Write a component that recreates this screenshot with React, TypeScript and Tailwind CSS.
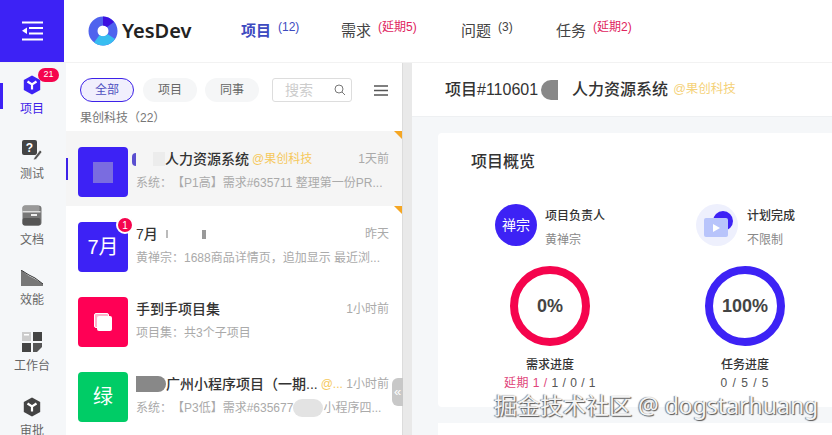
import React from "react";

const base = "font-['Liberation_Sans','Noto_Sans_CJK_SC',sans-serif] [text-spacing-trim:space-all]";

function CubeIcon({ fill }: { fill: string }) {
  return (
    <svg width="18" height="20" viewBox="0 0 18 20">
      <path d="M9 0.5 L17.2 5 V15 L9 19.5 L0.8 15 V5 Z" fill={fill} />
      <path d="M4.5 6.5 L9 9.5 L13.5 6.5 M9 9.5 V14.5" stroke="#fff" strokeWidth="2.2" fill="none" />
    </svg>
  );
}

function NavItem({ label, icon, h, active }: { label: string; icon: React.ReactNode; h: string; active?: boolean }) {
  return (
    <div className={`shrink-0 flex flex-col items-center justify-start ${h}`}>
      <div className="h-[23px] flex items-end justify-center">{icon}</div>
      <span className={`text-[12px] leading-[17px] mt-[6px] ${active ? "text-[#3d22e8]" : "text-[#666]"}`}>{label}</span>
    </div>
  );
}

function Row({
  selected, thumb, title, time, sub, corner, badge,
}: {
  selected?: boolean; thumb: React.ReactNode; title: React.ReactNode; time: string; sub: React.ReactNode; corner?: boolean; badge?: boolean;
}) {
  return (
    <div className={`relative h-[75px] flex items-start pt-[16px] pl-[12px] pr-[13px] ${selected ? "bg-[#f5f5f5]" : "bg-white"}`}>
      {selected && <div className="absolute -left-[1px] top-[27px] w-[3px] h-[22px] bg-[#3d22e8]" />}
      {corner && (
        <div className="absolute right-0 top-0 w-0 h-0 border-l-[8px] border-l-transparent border-t-[8px] border-t-[#f5a623]" />
      )}
      <div className="relative shrink-0">
        {thumb}
        {badge && (
          <div className="absolute -right-[6px] -top-[6px] w-[18px] h-[18px] rounded-full bg-[#f5044d] border-2 border-white text-white text-[10px] flex items-center justify-center">1</div>
        )}
      </div>
      <div className="ml-[8px] flex-1 min-w-0 pt-[2px]">
        <div className="flex items-center justify-between h-[20px]">
          <div className="min-w-0 flex items-center text-[14px] font-medium text-[#333] whitespace-nowrap">{title}</div>
          <span className="shrink-0 ml-[3px] text-[12px] text-[#aaa]">{time}</span>
        </div>
        <div className="mt-[4px] text-[12px] leading-[20px] text-[#aaa] whitespace-nowrap overflow-hidden">{sub}</div>
      </div>
    </div>
  );
}

function Thumb({ color, children }: { color: string; children?: React.ReactNode }) {
  return (
    <div className={`w-[50px] h-[50px] rounded-[4px] flex items-center justify-center text-white text-[20px] ${color}`}>{children}</div>
  );
}

function Ring({ color, label }: { color: string; label: string }) {
  return (
    <div className={`w-[80px] h-[80px] rounded-full border-[8px] flex items-center justify-center ${color}`}>
      <span className="text-[18px] font-bold text-[#444]">{label}</span>
    </div>
  );
}

function NavTab({ label, note, w, active, noteColor }: { label: string; note: string; w: string; active?: boolean; noteColor: string }) {
  return (
    <div className={`flex items-start ${w}`}>
      <span className={`text-[15px] leading-[22px] ${active ? "font-semibold text-[#3d4ac0]" : "text-[#444]"}`}>{label}</span>
      <span className={`ml-[7px] -mt-[1px] text-[12px] leading-[16px] ${noteColor}`}>{note}</span>
    </div>
  );
}

export default function App() {
  return (
    <div className={`w-[832px] h-[435px] overflow-hidden relative flex flex-col bg-[#f5f7f9] ${base}`}>
      {/* top bar */}
      <header className="h-[63px] shrink-0 flex items-stretch bg-white border-b border-[#f2f2f2]">
        <div className="w-[64px] bg-[#3d22f5] flex items-center justify-center">
          <svg width="22" height="20" viewBox="0 0 22 20">
            <path d="M1 1.5H22M8 7H22M8 12.5H22M1 18.5H22" stroke="#fff" strokeWidth="2" />
            <path d="M6 6.5V13L1 9.8Z" fill="#fff" />
          </svg>
        </div>
        <div className="ml-[24px] flex items-center w-[153px]">
          <svg width="30" height="30" viewBox="0 0 30 30">
            <circle cx="15" cy="15" r="10" fill="none" stroke="#4f63ee" strokeWidth="9" />
            <path d="M15 0.5 A14.5 14.5 0 0 1 26 6 L19 11 A5.5 5.5 0 0 0 15 9.5 Z" fill="#3d10e0" />
            <path d="M27 23 A14.5 14.5 0 0 1 6 26.5 L11.5 19 A5.5 5.5 0 0 0 19.5 18 Z" fill="#38bdf0" />
          </svg>
          <span className="ml-[4px] text-[20px] font-semibold text-[#222] font-['Noto_Sans',sans-serif]">YesDev</span>
        </div>
        <nav className="flex items-center whitespace-nowrap">
          <NavTab w="w-[100px]" label="项目" note="(12)" active noteColor="text-[#3d4ac0]" />
          <NavTab w="w-[120px]" label="需求" note="(延期5)" noteColor="text-[#e0245e]" />
          <NavTab w="w-[95px]" label="问题" note="(3)" noteColor="text-[#444]" />
          <NavTab w="" label="任务" note="(延期2)" noteColor="text-[#e0245e]" />
        </nav>
      </header>

      <div className="flex-1 flex min-h-0">
        {/* side nav */}
        <aside className="relative w-[64px] shrink-0 bg-[#f5f7f9] pt-[9px] flex flex-col overflow-hidden">
          <div className="absolute left-0 top-[20px] w-[3px] h-[26px] bg-[#3d22f5]" />
          <NavItem h="h-[65px]" label="项目" active icon={<div className="relative"><CubeIcon fill="#3d22f5" /><div className="absolute left-[15px] -top-[7px] w-[21px] h-[14px] rounded-full bg-[#f5044d] text-white text-[9px] flex items-center justify-center">21</div></div>} />
          <NavItem h="h-[66px]" label="测试" icon={
            <svg width="20" height="20" viewBox="0 0 20 20"><rect x="0" y="0" width="15" height="15" rx="2" fill="#444" /><text x="7.5" y="12" fontSize="12" fontWeight="700" fill="#fff" textAnchor="middle">?</text><path d="M12 18 L18 10 L20 12 L14 19.5 L11.5 20 Z" fill="#555" stroke="#fff" strokeWidth="0.6" /></svg>
          } />
          <NavItem h="h-[60px]" label="文档" icon={
            <svg width="20" height="21" viewBox="0 0 20 21"><rect x="0.5" y="0.5" width="19" height="20" rx="3" fill="#777" /><rect x="0.5" y="0.5" width="17" height="6" rx="2" fill="#999" /><rect x="0.5" y="6" width="18" height="1.5" fill="#ddd" /><rect x="9" y="9" width="6" height="2" fill="#eee" /><rect x="0.5" y="13" width="18" height="7.5" rx="2" fill="#555" /></svg>
          } />
          <NavItem h="h-[66px]" label="效能" icon={
            <svg width="22" height="16" viewBox="0 0 22 16"><path d="M0 0 L8 6 L14 9 L22 14 V16 H0 Z" fill="#777" /><path d="M0 0 L8 5 L14 8 L22 14" stroke="#333" strokeWidth="1" fill="none" /></svg>
          } />
          <NavItem h="h-[65px]" label="工作台" icon={
            <svg width="20" height="20" viewBox="0 0 20 20"><rect x="0" y="0" width="9" height="9" fill="#ccc" /><rect x="2" y="2" width="5" height="1.5" fill="#fff" /><rect x="11" y="0" width="9" height="9" fill="#444" /><rect x="0" y="11" width="9" height="9" fill="#444" /><path d="M11 11H20V15L15 20H11Z" fill="#555" /></svg>
          } />
          <NavItem h="h-[60px]" label="审批" icon={<CubeIcon fill="#444" />} />
        </aside>

        {/* list panel */}
        <section className="w-[336px] shrink-0 ml-[2px] bg-white relative overflow-hidden">
          <div className="flex items-center h-[24px] mt-[15px] pl-[14px] text-[12px]">
            <div className="w-[54px] h-[24px] rounded-full border border-[#3d22e8] bg-[#f1effd] text-[#4f4fc0] flex items-center justify-center">全部</div>
            <div className="ml-[9px] w-[54px] h-[24px] rounded-full bg-[#f5f6f7] text-[#666] flex items-center justify-center">项目</div>
            <div className="ml-[8px] w-[54px] h-[24px] rounded-full bg-[#f5f6f7] text-[#666] flex items-center justify-center">同事</div>
            <div className="ml-[13px] w-[80px] h-[24px] rounded-[3px] border border-[#ddd] flex items-center justify-between pl-[12px] pr-[5px] text-[14px] text-[#ccc]">
              <span>搜索</span>
              <svg width="12" height="12" viewBox="0 0 12 12" fill="none" stroke="#777"><circle cx="5" cy="5" r="4" /><path d="M8 8L11 11" /></svg>
            </div>
            <svg className="ml-[22px]" width="14" height="11" viewBox="0 0 14 11" stroke="#555" strokeWidth="1.4"><path d="M0 1H14M0 5.5H14M0 10H14" /></svg>
          </div>
          <div className="pl-[14px] text-[12px] leading-[17px] pt-[8px] h-[29px] text-[#777]">果创科技（22）</div>

          <Row
            selected corner
            thumb={<Thumb color="bg-[#3d22f5]"><div className="w-[20px] h-[21px] bg-[#7a6ce0]" /></Thumb>}
            title={<><span className="w-[4px] h-[13px] shrink-0 rounded-l-full bg-[#5a4fd0] mr-[17px] -ml-[4px]" /><span className="w-[12px] h-[14px] shrink-0 bg-[#ececec]" /><span>人力资源系统</span><span className="ml-[3px] text-[12px] font-normal text-[#f5c95d]">@果创科技</span></>}
            time="1天前"
            sub="系统：【P1高】需求#635711 整理第一份PR..."
          />
          <Row
            corner badge
            thumb={<Thumb color="bg-[#3d22f5]"><span className="text-[20px]">7月</span></Thumb>}
            title={<><span>7月</span><span className="ml-[8px] w-[2px] h-[8px] bg-[#bbb]" /><span className="ml-[34px] w-[4px] h-[9px] bg-[#999]" /></>}
            time="昨天"
            sub="黄禅宗：1688商品详情页，追加显示 最近浏..."
          />
          <Row
            thumb={<Thumb color="bg-[#ff0055]"><div className="relative w-[18px] h-[18px]"><div className="absolute left-0 top-0 w-[15px] h-[15px] rounded-[2px] border border-white bg-[#ffb3cc]" /><div className="absolute left-[3px] top-[3px] w-[15px] h-[15px] rounded-[2px] bg-white" /></div></Thumb>}
            title="手到手项目集"
            time="1小时前"
            sub="项目集：共3个子项目"
          />
          <Row
            thumb={<Thumb color="bg-[#00cc66]">绿</Thumb>}
            title={<><span className="w-[30px] h-[16px] shrink-0 rounded-r-full bg-[#888]" /><span>广州小程序项目（一期...</span><span className="ml-[3px] text-[12px] font-normal text-[#f5c95d]">@...</span></>}
            time="1小时前"
            sub={<span className="flex items-center">系统：【P3低】需求#635677<span className="w-[30px] h-[18px] rounded-full bg-[#e3e3e3] shrink-0" />小程序四...</span>}
          />
        </section>

        {/* divider */}
        <div className="relative w-[10px] shrink-0 bg-[#e9e9e9] border-l border-[#dcdcdc]">
          <div className="absolute -left-[11px] top-[315px] w-[11px] h-[28px] rounded-l-[6px] bg-[#c8c8c8] text-white text-[13px] flex items-center justify-center">«</div>
        </div>

        {/* detail */}
        <main className="flex-1 min-w-0 flex flex-col bg-[#f5f7f9]">
          <div className="h-[54px] shrink-0 bg-white flex items-center pl-[33px] whitespace-nowrap border-b border-[#eef0f2]">
            <span className="text-[16px] font-medium text-[#333]">项目#110601</span>
            <span className="ml-[3px] w-[17px] h-[20px] rounded-l-full bg-[#888]" />
            <span className="w-[14px]" />
            <span className="text-[16px] font-medium text-[#333]">人力资源系统</span>
            <span className="ml-[5px] text-[12.5px] text-[#f5d27a]">@果创科技</span>
          </div>
          <div className="flex-1 min-h-0 pl-[26px] pt-[16px] overflow-hidden">
            <div className="bg-white rounded-l-[4px] h-[274px] pt-[18px] pl-[33px] overflow-hidden">
              <h2 className="text-[16px] font-medium text-[#333] leading-[22px]">项目概览</h2>
              <div className="mt-[31px] flex">
                <div className="w-[201px] shrink-0 pl-[24px]">
                  <div className="flex items-start">
                    <div className="w-[42px] h-[42px] rounded-full bg-[#3d22f5] text-white text-[14px] flex items-center justify-center">禅宗</div>
                    <div className="ml-[8px] pt-[4px]">
                      <div className="text-[12px] font-medium text-[#333] leading-[16px]">项目负责人</div>
                      <div className="mt-[8px] text-[12px] text-[#888] leading-[16px]">黄禅宗</div>
                    </div>
                  </div>
                  <div className="mt-[18px] ml-[15px] w-[80px]"><Ring color="border-[#f5044d]" label="0%" /></div>
                  <div className="mt-[11px] -ml-[5px] w-[120px] text-center">
                    <div className="text-[12px] font-medium text-[#333] leading-[16px]">需求进度</div>
                    <div className="mt-[2px] text-[12px] leading-[16px] text-[#555] tracking-[0.5px]"><span className="text-[#e0447a]">延期 1 / </span>1 / 0 / 1</div>
                  </div>
                </div>
                <div className="w-[160px] shrink-0 pl-[24px]">
                  <div className="flex items-start">
                    <div className="relative w-[42px] h-[42px] shrink-0 rounded-full bg-[#eef0fd]">
                      <div className="absolute left-[17px] top-[7px] w-[20px] h-[20px] rounded-full bg-[#3d22f5]" />
                      <div className="absolute left-[8px] top-[14px] w-[24px] h-[19px] rounded-[2px] bg-[#b8c4fb] flex items-center justify-center">
                        <svg width="10" height="10" viewBox="0 0 10 10"><path d="M2 1L9 5L2 9Z" fill="#fff" /></svg>
                      </div>
                    </div>
                    <div className="ml-[9px] pt-[4px] whitespace-nowrap">
                      <div className="text-[12px] font-medium text-[#333] leading-[16px]">计划完成</div>
                      <div className="mt-[8px] text-[12px] text-[#888] leading-[16px]">不限制</div>
                    </div>
                  </div>
                  <div className="mt-[18px] ml-[9px] w-[80px]"><Ring color="border-[#3d22f5]" label="100%" /></div>
                  <div className="mt-[11px] -ml-[11px] w-[120px] text-center">
                    <div className="text-[12px] font-medium text-[#333] leading-[16px]">任务进度</div>
                    <div className="mt-[2px] text-[12px] leading-[16px] text-[#555] tracking-[1px]">0 / 5 / 5</div>
                  </div>
                </div>
              </div>
            </div>
            <div className="mt-[16px] bg-white h-[40px]" />
          </div>
        </main>
      </div>

      {/* watermark */}
      <div className="absolute left-[494px] top-[391px] text-[23px] leading-[28px] text-[#f4f4f4] whitespace-nowrap font-['Noto_Sans','Noto_Sans_CJK_SC',sans-serif] [text-shadow:1px_1px_1px_#555,-1px_0_1px_#777]">掘金技术社区 @ dogstarhuang</div>
    </div>
  );
}
